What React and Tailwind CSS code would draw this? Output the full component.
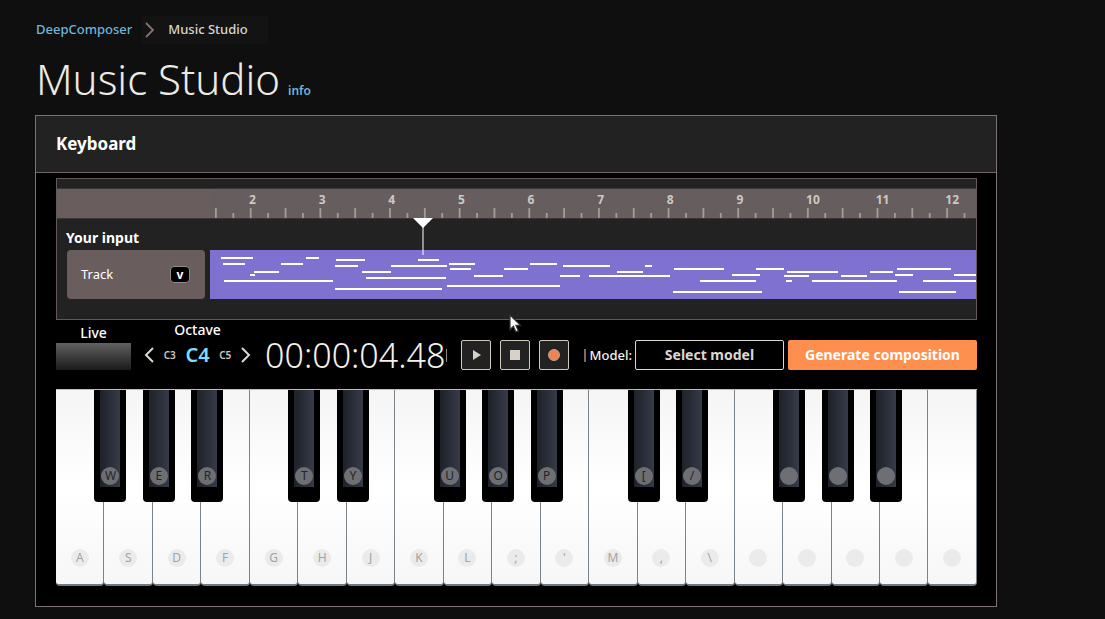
import React from "react";

const NOTES = [
  [11, 7, 32], [13, 13, 22], [71, 13, 22], [96, 7, 13], [44, 21, 25], [40, 24, 5], [14, 30, 109],
  [126, 9, 29], [125, 15, 23], [125, 38, 107], [208, 9, 21], [181, 15, 56], [152, 21, 29],
  [156, 27, 80], [239, 13, 26], [240, 18, 21], [264, 25, 29], [294, 18, 24], [320, 13, 27],
  [237, 35, 113], [353, 15, 47], [350, 25, 20], [379, 25, 81], [407, 21, 26], [435, 15, 7],
  [464, 18, 50], [522, 24, 28], [490, 30, 56], [463, 41, 89], [546, 18, 28], [574, 25, 25],
  [577, 21, 51], [576, 30, 6], [602, 30, 85], [631, 25, 26], [660, 21, 23], [685, 24, 18],
  [687, 18, 54], [689, 41, 57], [713, 30, 53], [744, 24, 22],
];

const BARS = [2, 3, 4, 5, 6, 7, 8, 9, 10, 11, 12];
const TICKS = Array.from({ length: 44 }, (_, i) => ({ x: 5 + i * 17.41, tall: i % 2 === 0 }));
const PLAYHEAD = 212.5 / 766;

// `sharp` is the black key that overlaps the left edge of its white key.
const KEYS = [
  { label: "A" }, { label: "S", sharp: "W" }, { label: "D", sharp: "E" }, { label: "F", sharp: "R" },
  { label: "G" }, { label: "H", sharp: "T" }, { label: "J", sharp: "Y" },
  { label: "K" }, { label: "L", sharp: "U" }, { label: ";", sharp: "O" }, { label: "'", sharp: "P" },
  { label: "M" }, { label: ",", sharp: "[" }, { label: "\\", sharp: "/" },
  { label: "" }, { label: "", sharp: "" }, { label: "", sharp: "" }, { label: "", sharp: "" },
  { label: "" },
];

function Breadcrumb() {
  return (
    <nav aria-label="Breadcrumb" className="flex h-7 items-center pl-px text-[13px] font-medium">
      <a href="#" className="text-[#6cb5dc]">DeepComposer</a>
      <div className="ml-[10px] flex h-7 items-center bg-[#131313] pr-5">
        <svg width="16" height="18" viewBox="0 0 16 18" fill="none" stroke="#86736f" strokeWidth="1.8" aria-hidden="true">
          <path d="M4 2l7 7-7 7" />
        </svg>
        <span className="ml-[10px] text-[#dbd3cb]">Music Studio</span>
      </div>
    </nav>
  );
}

function Ruler() {
  return (
    <div className="flex h-[31px] border-y border-[#3b3637] bg-[#6a5d5e]">
      <div className="w-[153px] shrink-0" />
      <div className="flex min-w-0 flex-1 flex-col justify-between bg-[#665e5e]">
        <div className="grid grid-cols-11 pt-[3px]">
          {BARS.map((n) => (
            <span key={n} className="pl-[39px] text-xs leading-4 font-bold text-[#cdc8c2]">{n}</span>
          ))}
        </div>
        <svg className="h-[10px] w-full" viewBox="0 0 766 10" preserveAspectRatio="none" aria-hidden="true">
          {TICKS.map((t) => (
            <rect key={t.x} x={t.x} y={t.tall ? 0 : 5} width="1.8" height={t.tall ? 10 : 5} fill="#a59c97" />
          ))}
        </svg>
      </div>
    </div>
  );
}

function Tracks() {
  return (
    <section className="relative border border-[#655859] bg-[#222222] pt-[9px] pb-5">
      <Ruler />
      <h3 className="mt-2 mb-px pl-[9px] text-sm leading-[22px] font-bold text-white">Your input</h3>
      <div className="flex h-[49px]">
        <div className="ml-[10px] flex w-[138px] shrink-0 items-center justify-between rounded-sm bg-[#695d5e] pr-[15px] pl-[14px]">
          <span className="text-[13px] text-white">Track</span>
          <button aria-label="Expand track" className="flex h-[17px] w-5 items-center justify-center rounded border border-[#8f8988] bg-black text-xs leading-3 font-bold text-white">v</button>
        </div>
        <svg className="ml-[5px] h-full min-w-0 flex-1 bg-[#7f71cf]" viewBox="0 0 766 49" preserveAspectRatio="none" role="img" aria-label="Recorded notes">
          {NOTES.map(([x, y, w]) => (
            <rect key={x + "-" + y} x={x} y={y} width={w} height="2" fill="#ffffff" />
          ))}
        </svg>
      </div>
      <div className="pointer-events-none absolute inset-y-0 right-0 left-[153px]">
        <svg className="absolute top-[39px] -ml-[10px]" style={{ left: `${PLAYHEAD * 100}%` }} width="20" height="37" viewBox="0 0 20 37" aria-hidden="true">
          <path d="M0 0h20L10 10z" fill="#fff" />
          <rect x="9.5" y="8" width="1" height="29" fill="#fff" />
        </svg>
      </div>
    </section>
  );
}

function TransportButton({ label, children }) {
  return (
    <button aria-label={label} className="flex size-[30px] items-center justify-center rounded-xs border border-[#cfc9bd] bg-[#222222]">
      <svg width="16" height="16" viewBox="0 0 16 16" aria-hidden="true">{children}</svg>
    </button>
  );
}

function Chevron({ d }) {
  return (
    <svg width="10" height="16" viewBox="0 0 10 16" fill="none" stroke="#dcd7d0" strokeWidth="2" aria-hidden="true">
      <path d={d} />
    </svg>
  );
}

function Controls() {
  return (
    <div className="flex h-[69px] items-start justify-between">
      <div className="flex">
        <div className="w-[75px] pt-[3px]">
          <div className="text-center text-sm leading-5 font-medium text-white">Live</div>
          <div className="h-[27px] bg-linear-to-b from-[#626262] via-[#3d3d3d] to-[#1b1b1b]" />
        </div>
        <div className="ml-[13px] w-[107px]">
          <div className="text-center text-sm leading-5 font-medium text-white">Octave</div>
          <div className="flex h-[30px] items-center justify-between">
            <button aria-label="Octave down"><Chevron d="M9 1L2 8l7 7" /></button>
            <span className="text-[10px] font-semibold text-[#cfcac4]">C3</span>
            <span className="text-xl font-semibold text-[#7ddcff]">C4</span>
            <span className="text-[10px] font-semibold text-[#cfcac4]">C5</span>
            <button aria-label="Octave up"><Chevron d="M1 1l7 7-7 7" /></button>
          </div>
        </div>
      </div>
      <div className="flex h-[70px] items-center">
        <span className="text-[34px] font-light text-[#f4f1ec]">00:00:04.48</span>
        <span className="ml-px h-[13px] w-px bg-[#8f8783]" />
      </div>
      <div className="flex h-[70px] items-center gap-[9px]">
        <TransportButton label="Play"><path d="M5 3l8 5-8 5z" fill="#d6d1cb" /></TransportButton>
        <TransportButton label="Stop"><rect x="3" y="3" width="10" height="10" fill="#d6d1cb" /></TransportButton>
        <TransportButton label="Record"><circle cx="8" cy="8" r="5.5" fill="#f0834f" stroke="#b9a49a" /></TransportButton>
      </div>
      <div className="flex h-[70px] items-center text-sm">
        <span className="mr-1 h-[13px] w-0.5 bg-[#756b6a]" />
        <span className="mr-[3px] text-[13px] font-medium text-[#f4f1ec]">Model:</span>
        <button className="mr-1 h-[30px] w-[149px] rounded-xs border border-[#dcd6ce] font-bold text-[#dcd6ce]">Select model</button>
        <button className="h-[30px] w-[189px] rounded-xs bg-[#ff8f4e] font-bold text-white">Generate composition</button>
      </div>
    </div>
  );
}

function Piano() {
  return (
    <div className="flex h-[197px] border-t border-[#b9bfc2]">
      {KEYS.map((key, i) => (
        <div key={i} className="relative flex-1">
          <button
            aria-label={key.label ? undefined : "White key " + (i + 1)}
            className="flex h-full w-full items-end justify-center rounded-b-sm border-r border-b-2 border-r-[#7b838a] border-b-[#6f797f] bg-linear-to-b from-[#f5f5f5] via-white to-[#f7f7f7] pb-[17px]"
          >
            <span className="flex size-[18px] items-center justify-center rounded-full bg-[#ebebeb] text-xs text-[#a3a3a3]">{key.label}</span>
          </button>
          {key.sharp !== undefined && (
            <button
              aria-label={key.sharp ? undefined : "Black key " + i}
              className="absolute top-0 -left-[10px] z-10 h-[112px] w-8 rounded-b bg-black px-[6px] pb-[15px]"
            >
              <span className="flex h-full items-end justify-center bg-linear-to-r from-[#1d2129] to-[#373b48] pb-[2px]">
                <span className="flex size-[18px] shrink-0 items-center justify-center rounded-full bg-[#6d6f73] text-xs text-[#22252b]">{key.sharp}</span>
              </span>
            </button>
          )}
        </div>
      ))}
    </div>
  );
}

function Cursor() {
  return (
    <svg className="pointer-events-none absolute top-[314px] left-[508px] z-20" width="14" height="20" viewBox="0 0 14 20" aria-hidden="true">
      <path d="M2 1v14.5l3.4-3.2 2.5 5.6 2.4-1.1-2.4-5.4h4.6z" fill="#fff" stroke="#333" strokeWidth="1.2" />
    </svg>
  );
}

export default function App() {
  return (
    <div className="relative min-h-screen bg-[#0f0f0f] pt-4 pr-[108px] pb-3 pl-[35px] font-['Noto_Sans','Open_Sans',sans-serif]">
      <Breadcrumb />
      <header className="flex h-[71px] items-baseline pt-[5px] pl-px">
        <h1 className="text-[42px] leading-[60px] font-light text-[#eceae4]">Music Studio</h1>
        <a href="#" className="ml-2 text-xs font-semibold text-[#6cb5dc]">info</a>
      </header>
      <main className="border border-[#7d7371] bg-black">
        <div className="flex h-14 items-center bg-[#222222] pl-5">
          <h2 className="text-[17px] font-bold text-white">Keyboard</h2>
        </div>
        <div className="border-t border-[#6f6664] pt-[5px] pr-[19px] pb-5 pl-5">
          <Tracks />
          <Controls />
          <Piano />
        </div>
      </main>
      <Cursor />
    </div>
  );
}
